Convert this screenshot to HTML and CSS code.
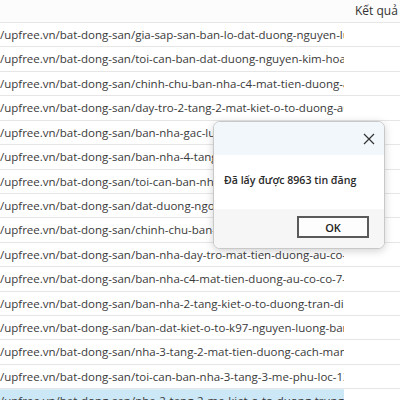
FILE: index.html
```html
<!DOCTYPE html>
<html>
<head>
<meta charset="utf-8">
<link rel="stylesheet" href="styles.css">
</head>
<body>
<div class="grid">
  <div class="row head"><div class="c1"></div><div class="c2">Kết quả</div></div>
  <div class="row"><div class="c1">/upfree.vn/bat-dong-san/gia-sap-san-ban-lo-dat-duong-nguyen-luong-bang</div><div class="c2"></div></div>
  <div class="row"><div class="c1">/upfree.vn/bat-dong-san/toi-can-ban-dat-duong-nguyen-kim-hoang</div><div class="c2"></div></div>
  <div class="row"><div class="c1">/upfree.vn/bat-dong-san/chinh-chu-ban-nha-c4-mat-tien-duong-au-co</div><div class="c2"></div></div>
  <div class="row"><div class="c1">/upfree.vn/bat-dong-san/day-tro-2-tang-2-mat-kiet-o-to-duong-au-co</div><div class="c2"></div></div>
  <div class="row"><div class="c1">/upfree.vn/bat-dong-san/ban-nha-gac-lung-kiet-o-to-duong-ton-dan</div><div class="c2"></div></div>
  <div class="row"><div class="c1">/upfree.vn/bat-dong-san/ban-nha-4-tang-mat-tien-duong-hoang-van-thai</div><div class="c2"></div></div>
  <div class="row"><div class="c1">/upfree.vn/bat-dong-san/toi-can-ban-nha-kiet-o-to-duong-le-duan</div><div class="c2"></div></div>
  <div class="row"><div class="c1">/upfree.vn/bat-dong-san/dat-duong-ngo-thi-nham-lien-chieu</div><div class="c2"></div></div>
  <div class="row"><div class="c1">/upfree.vn/bat-dong-san/chinh-chu-ban-nha-kiet-duong-ton-dan</div><div class="c2"></div></div>
  <div class="row"><div class="c1">/upfree.vn/bat-dong-san/ban-nha-day-tro-mat-tien-duong-au-co-co-8</div><div class="c2"></div></div>
  <div class="row"><div class="c1">/upfree.vn/bat-dong-san/ban-nha-c4-mat-tien-duong-au-co-co-7-phong</div><div class="c2"></div></div>
  <div class="row"><div class="c1">/upfree.vn/bat-dong-san/ban-nha-2-tang-kiet-o-to-duong-tran-dinh-tri</div><div class="c2"></div></div>
  <div class="row"><div class="c1">/upfree.vn/bat-dong-san/ban-dat-kiet-o-to-k97-nguyen-luong-bang</div><div class="c2"></div></div>
  <div class="row"><div class="c1">/upfree.vn/bat-dong-san/nha-3-tang-2-mat-tien-duong-cach-mang-thang-8</div><div class="c2"></div></div>
  <div class="row"><div class="c1">/upfree.vn/bat-dong-san/toi-can-ban-nha-3-tang-3-me-phu-loc-13</div><div class="c2"></div></div>
  <div class="row sel"><div class="c1">/upfree.vn/bat-dong-san/nha-2-tang-2-me-kiet-o-to-duong-trung-nu-vuong</div><div class="c2"></div></div>
</div>

<div class="dialog">
  <div class="dtitle">
    <svg class="close" width="12" height="12" viewBox="0 0 12 12"><path d="M1 1 L11 11 M11 1 L1 11" stroke="#333" stroke-width="1.2" fill="none"/></svg>
  </div>
  <div class="dbody">Đã lấy được 8963 tin đăng</div>
  <div class="dfoot"><div class="btn">OK</div></div>
</div>
</body>
</html>
```

FILE: styles.css
```css
html, body {
  margin: 0;
  padding: 0;
  background: #fff;
}
body {
  width: 400px;
  height: 400px;
  overflow: hidden;
  position: relative;
  font-family: "Open Sans", "Noto Sans", sans-serif;
  font-size: 11.5px;
  color: #3a3a3a;
}
.grid {
  display: flex;
  flex-direction: column;
}
.row {
  display: flex;
  height: 24.43px;
  box-sizing: border-box;
  border-bottom: 1px solid #e6e6e6;
  flex: none;
}
.row.head {
  height: 23px;
  background: #fcfcfc;
}
.c1 {
  width: 349px;
  flex: none;
  box-sizing: border-box;
  border-right: 1px solid #e6e6e6;
  white-space: nowrap;
  overflow: hidden;
  padding-right: 5px;
  line-height: 23px;
  letter-spacing: 0;
  clip-path: inset(0 5px 0 0);
}
.c2 {
  flex: 1;
  padding-left: 6px;
  line-height: 22px;
  color: #333;
  font-size: 12px;
}
.row.sel .c1 {
  background: #cce8f7;
}
.dialog {
  position: absolute;
  left: 213px;
  top: 121px;
  width: 172px;
  height: 128px;
  box-sizing: border-box;
  border: 1px solid #c8c8c8;
  border-radius: 7px;
  background: #fff;
  box-shadow: 0 2px 8px rgba(0,0,0,0.18);
  overflow: hidden;
  display: flex;
  flex-direction: column;
  font-family: "Open Sans", "Noto Sans", sans-serif;
}
.dtitle {
  height: 33px;
  background: #f2f7fc;
  display: flex;
  justify-content: flex-end;
  align-items: center;
  padding-right: 9px;
  flex: none;
}
.close {
  display: block;
}
.dbody {
  flex: 1;
  display: flex;
  align-items: center;
  padding: 0 0 4px 10px;
  font-size: 10.6px;
  font-weight: 600;
  color: #2a2a2a;
}
.dfoot {
  height: 39px;
  flex: none;
  background: #f6f6f6;
  display: flex;
  justify-content: flex-end;
  align-items: flex-start;
  padding: 7px 15px 0 0;
  box-sizing: border-box;
}
.btn {
  width: 72px;
  height: 22px;
  box-sizing: border-box;
  border: 2px solid #5a5a5a;
  background: #fdfdfd;
  display: flex;
  align-items: center;
  justify-content: center;
  font-size: 11px;
  font-weight: 600;
  color: #222;
}
```
